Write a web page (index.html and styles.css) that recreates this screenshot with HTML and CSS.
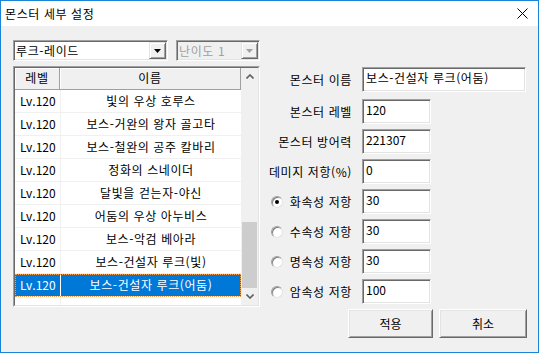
FILE: index.html
```html
<!DOCTYPE html>
<html lang="ko">
<head>
    <meta charset="UTF-8">
    <title>몬스터 세부 설정</title>
    <link rel="stylesheet" href="styles.css">
</head>
<body>
    <div class="window">
        <div class="titlebar">
            <span class="title">몬스터 세부 설정</span>
            <svg class="close" width="11" height="11" viewBox="0 0 11 11">
                <path d="M0.5 0.5 L10.5 10.5 M10.5 0.5 L0.5 10.5" stroke="#000" stroke-width="1" fill="none"/>
            </svg>
        </div>

        <div class="client">
            <div class="left">
                <div class="combos">
                    <div class="combo sunken combo-main">
                        <span class="combo-text">루크-레이드</span>
                        <span class="drop raised">
                            <svg width="7" height="4" viewBox="0 0 7 4"><path d="M0 0 H7 L3.5 4 Z" fill="#000"/></svg>
                        </span>
                    </div>
                    <div class="combo sunken combo-level disabled">
                        <span class="combo-text">난이도 1</span>
                        <span class="drop raised">
                            <svg width="7" height="4" viewBox="0 0 7 4"><path d="M0 0 H7 L3.5 4 Z" fill="#a0a0a0"/></svg>
                        </span>
                    </div>
                </div>

                <div class="list">
                    <div class="list-inner">
                        <div class="list-body">
                            <div class="list-head">
                                <div class="head-lv">레벨</div>
                                <div class="head-name">이름</div>
                            </div>
                            <div class="row"><div class="cell-lv">Lv.120</div><div class="cell-name">빛의 우상 호루스</div></div>
                            <div class="row"><div class="cell-lv">Lv.120</div><div class="cell-name">보스-거완의 왕자 골고타</div></div>
                            <div class="row"><div class="cell-lv">Lv.120</div><div class="cell-name">보스-철완의 공주 칼바리</div></div>
                            <div class="row"><div class="cell-lv">Lv.120</div><div class="cell-name">정화의 스네이더</div></div>
                            <div class="row"><div class="cell-lv">Lv.120</div><div class="cell-name">달빛을 걷는자-야신</div></div>
                            <div class="row"><div class="cell-lv">Lv.120</div><div class="cell-name">어둠의 우상 아누비스</div></div>
                            <div class="row"><div class="cell-lv">Lv.120</div><div class="cell-name">보스-악검 베아라</div></div>
                            <div class="row"><div class="cell-lv">Lv.120</div><div class="cell-name">보스-건설자 루크(빛)</div></div>
                            <div class="row selected"><div class="cell-lv">Lv.120</div><div class="cell-name">보스-건설자 루크(어둠)</div></div>
                            <div class="row filler"><div class="cell-lv"></div><div class="cell-name"></div></div>
                        </div>
                        <div class="scrollbar">
                            <div class="sb-btn">
                                <svg width="8" height="5" viewBox="0 0 8 5"><path d="M0.5 4.5 L4 1 L7.5 4.5" stroke="#606060" stroke-width="1.6" fill="none"/></svg>
                            </div>
                            <div class="sb-track"><div class="sb-thumb"></div></div>
                            <div class="sb-btn">
                                <svg width="8" height="5" viewBox="0 0 8 5"><path d="M0.5 0.5 L4 4 L7.5 0.5" stroke="#606060" stroke-width="1.6" fill="none"/></svg>
                            </div>
                        </div>
                    </div>
                </div>
            </div>

            <div class="right">
                <div class="field name-field">
                    <span class="label">몬스터 이름</span>
                    <div class="edit sunken wide">보스-건설자 루크(어둠)</div>
                </div>
                <div class="field">
                    <span class="label">본스터 레벨</span>
                    <div class="edit sunken num">120</div>
                </div>
                <div class="field">
                    <span class="label">몬스터 방어력</span>
                    <div class="edit sunken num">221307</div>
                </div>
                <div class="field">
                    <span class="label">데미지 저항(%)</span>
                    <div class="edit sunken num">0</div>
                </div>
                <div class="field">
                    <span class="label radio-label"><span class="radio checked"></span>화속성 저항</span>
                    <div class="edit sunken num">30</div>
                </div>
                <div class="field">
                    <span class="label radio-label"><span class="radio"></span>수속성 저항</span>
                    <div class="edit sunken num">30</div>
                </div>
                <div class="field">
                    <span class="label radio-label"><span class="radio"></span>명속성 저항</span>
                    <div class="edit sunken num">30</div>
                </div>
                <div class="field">
                    <span class="label radio-label"><span class="radio"></span>암속성 저항</span>
                    <div class="edit sunken num">100</div>
                </div>

                <div class="buttons">
                    <button class="btn btn-ok">적용</button>
                    <button class="btn btn-cancel">취소</button>
                </div>
            </div>
        </div>
    </div>
</body>
</html>
```

FILE: styles.css
```css
* {
    box-sizing: border-box;
}
body {
    margin: 0;
    font-family: "Noto Sans CJK KR", "Noto Sans", sans-serif;
    font-size: 12px;
    letter-spacing: 0.6px;
    color: #000;
    background: #f0f0f0;
}
.window {
    width: 539px;
    height: 353px;
    border: 1px solid #1a84d8;
    background: #f0f0f0;
    display: flex;
    flex-direction: column;
}
.titlebar {
    height: 25px;
    background: #fff;
    display: flex;
    align-items: center;
    justify-content: space-between;
    padding: 0 10px 0 4px;
}
.title {
    line-height: 16px;
}
.client {
    flex: 1;
    display: flex;
    padding: 14px 0 0 12px;
}

/* 3D edges */
.sunken {
    border: 1px solid;
    border-color: #a0a0a0 #fff #fff #a0a0a0;
    box-shadow: inset 1px 1px #696969, inset -1px -1px #e3e3e3;
    background: #fff;
}
.raised {
    background: #f0f0f0;
    border: 1px solid;
    border-color: #e3e3e3 #696969 #696969 #e3e3e3;
    box-shadow: inset 1px 1px #fff, inset -1px -1px #a0a0a0;
}

/* left side */
.left {
    width: 247px;
}
.combos {
    display: flex;
    gap: 8px;
    height: 21px;
}
.combo {
    display: flex;
    padding: 1px;
}
.combo-main {
    width: 155px;
}
.combo-level {
    width: 84px;
}
.combo.disabled {
    background: #f0f0f0;
    color: #a0a0a0;
}
.combo-text {
    flex: 1;
    padding-left: 1px;
    line-height: 17px;
}
.drop {
    width: 17px;
    display: flex;
    align-items: center;
    justify-content: center;
}

.list {
    margin-top: 5px;
    height: 241px;
    border: 1px solid;
    border-color: #a0a0a0 #fff #fff #a0a0a0;
}
.list-inner {
    height: 100%;
    border: 1px solid;
    border-color: #696969 #e3e3e3 #e3e3e3 #696969;
    background: #fff;
    display: flex;
}
.list-body {
    flex: 1;
    display: flex;
    flex-direction: column;
}
.list-head {
    display: flex;
    height: 22px;
}
.list-head div {
    background: #f0f0f0;
    box-shadow: inset 1px 1px #fff;
    border-right: 1px solid #a0a0a0;
    border-bottom: 1px solid #a0a0a0;
    text-align: center;
    line-height: 20px;
}
.head-lv {
    width: 45px;
}
.head-name {
    flex: 1;
}
.row {
    display: flex;
    height: 23px;
    line-height: 22px;
}
.cell-lv {
    width: 46px;
    padding-left: 5px;
    letter-spacing: 0;
    border-right: 1px solid #f0f0f0;
    border-bottom: 1px solid #f0f0f0;
}
.cell-name {
    flex: 1;
    text-align: center;
    border-bottom: 1px solid #f0f0f0;
}
.row.selected {
    background: #0078d7;
    color: #fff;
    outline: 1px dotted #f0a050;
    outline-offset: -1px;
}
.row.selected .cell-lv {
    border-right-color: #fff;
}
.row.filler {
    flex: 1;
    height: auto;
}
.row.filler div {
    border-bottom: none;
}

.scrollbar {
    width: 17px;
    display: flex;
    flex-direction: column;
    background: #f0f0f0;
}
.sb-btn {
    height: 17px;
    display: flex;
    align-items: center;
    justify-content: center;
}
.sb-track {
    flex: 1;
    display: flex;
    flex-direction: column;
    justify-content: flex-end;
    padding: 0 1px;
}
.sb-thumb {
    height: 66px;
    background: #cdcdcd;
}

/* right side */
.right {
    width: 259px;
    margin-left: 8px;
    margin-top: 27px;
    display: flex;
    flex-direction: column;
    gap: 5px;
}
.field {
    display: flex;
    gap: 10px;
    height: 25px;
}
.name-field {
    margin-bottom: 2px;
}
.label {
    width: 84px;
    text-align: right;
    line-height: 26px;
    white-space: nowrap;
}
.radio-label {
    display: flex;
    align-items: center;
    justify-content: space-between;
    padding-left: 3px;
}
.radio {
    width: 12px;
    height: 12px;
    border-radius: 50%;
    border: 1px solid;
    border-color: #a0a0a0 #e3e3e3 #e3e3e3 #a0a0a0;
    box-shadow: inset 1px 1px #808080;
    background: #fff;
    display: flex;
    align-items: center;
    justify-content: center;
}
.radio.checked::after {
    content: "";
    width: 4px;
    height: 4px;
    border-radius: 50%;
    background: #000;
}
.edit {
    width: 69px;
    padding: 1px 3px;
    line-height: 17px;
}
.edit.num {
    letter-spacing: 0;
}
.edit.wide {
    width: 164px;
}

.buttons {
    display: flex;
    justify-content: flex-end;
    gap: 6px;
}
.btn {
    font: inherit;
    color: #000;
    height: 29px;
    padding: 0;
    background: #f0f0f0;
    border: 1px solid;
    border-color: #fff #696969 #696969 #fff;
    box-shadow: inset 1px 1px #e3e3e3, inset -1px -1px #a0a0a0;
}
.btn-ok {
    width: 85px;
}
.btn-cancel {
    width: 88px;
}
```
